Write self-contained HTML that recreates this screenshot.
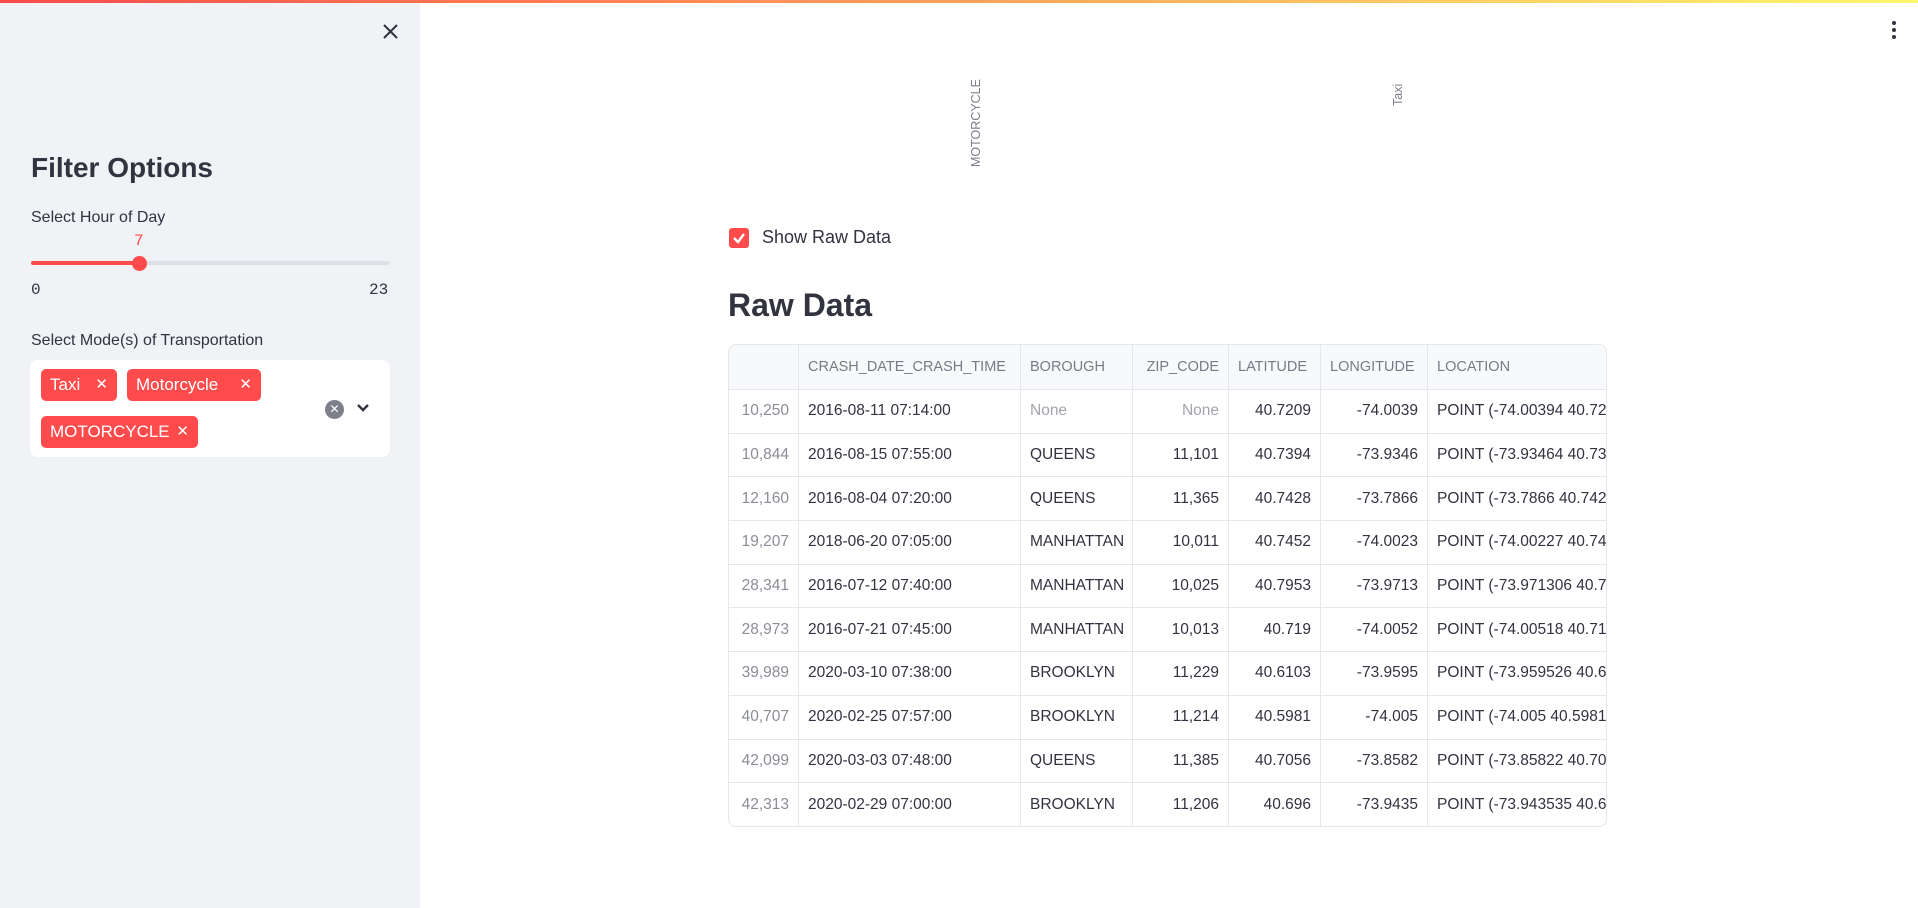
<!DOCTYPE html>
<html><head><meta charset="utf-8">
<style>
*{box-sizing:border-box;margin:0;padding:0}
body{width:1918px;height:908px;overflow:hidden;font-family:"Liberation Sans",sans-serif;background:#fff;color:#31333f;position:relative}
.topbar{position:absolute;left:0;top:0;width:1918px;height:3px;background:linear-gradient(90deg,#ff4b4b,#fdf76a)}
.side{position:absolute;left:0;top:0;width:420px;height:908px;background:#f0f2f6}
.abs{position:absolute;white-space:nowrap}
.tag{position:absolute;height:32px;background:#ff4b4b;color:#fff;border-radius:5px;font-size:17px;line-height:32px;padding-left:9px}
.tag span{position:absolute;right:9px;font-size:15px}
table{border-collapse:collapse;font-size:15.5px;table-layout:fixed}
td,th{border:1px solid #e6e7ea;height:43.7px;padding:0 9px;white-space:nowrap;overflow:hidden;font-weight:normal}
th{background:#f8f9fb;color:#777b85;text-align:left;height:45px;font-size:14.5px}
td.r{text-align:right}
td.i{color:#8a8d96;text-align:right}
td.n{color:#a3a5ad}
</style></head><body>
<div class="side"></div>
<div class="topbar"></div>
<svg class="abs" style="left:382px;top:23px" width="17" height="17" viewBox="0 0 17 17"><path d="M2 2L15 15M15 2L2 15" stroke="#31333f" stroke-width="2"/></svg>
<div class="abs" style="left:31px;top:152px;font-size:28px;font-weight:bold">Filter Options</div>
<div class="abs" style="left:31px;top:209px;font-size:16px">Select Hour of Day</div>
<div class="abs" style="left:134px;top:232px;font-size:16px;color:#ff4b4b;font-family:'Liberation Mono',monospace">7</div>
<div class="abs" style="left:31px;top:261px;width:359px;height:4px;background:#dde0e7;border-radius:2px"></div>
<div class="abs" style="left:31px;top:261px;width:109px;height:4px;background:#ff4b4b;border-radius:2px"></div>
<div class="abs" style="left:132px;top:256px;width:15px;height:15px;background:#ff4b4b;border-radius:50%"></div>
<div class="abs" style="left:31px;top:281px;font-size:16px;font-family:'Liberation Mono',monospace">0</div>
<div class="abs" style="left:369px;top:281px;font-size:16px;font-family:'Liberation Mono',monospace">23</div>
<div class="abs" style="left:31px;top:332px;font-size:16px">Select Mode(s) of Transportation</div>
<div class="abs" style="left:30px;top:360px;width:360px;height:97px;background:#fff;border-radius:8px"></div>
<div class="tag" style="left:41px;top:369px;width:76px">Taxi<span>✕</span></div>
<div class="tag" style="left:127px;top:369px;width:134px">Motorcycle<span>✕</span></div>
<div class="tag" style="left:41px;top:416px;width:157px">MOTORCYCLE<span>✕</span></div>
<div class="abs" style="left:325px;top:400px;width:19px;height:19px;border-radius:50%;background:#7d808a;color:#fff;font-size:12px;line-height:19px;text-align:center">✕</div>
<svg class="abs" style="left:356px;top:403px" width="14" height="10" viewBox="0 0 14 10"><path d="M2 2L7 7L12 2" stroke="#31333f" stroke-width="2.4" fill="none"/></svg>
<svg class="abs" style="left:1890px;top:20px" width="8" height="20"><circle cx="4" cy="3" r="2" fill="#31333f"/><circle cx="4" cy="10" r="2" fill="#31333f"/><circle cx="4" cy="17" r="2" fill="#31333f"/></svg>
<div class="abs" style="left:969px;top:167px;font-size:12.5px;color:#7d808a;transform:rotate(-90deg);transform-origin:0 0">MOTORCYCLE</div>
<div class="abs" style="left:1391px;top:106px;font-size:12.5px;color:#7d808a;transform:rotate(-90deg);transform-origin:0 0">Taxi</div>
<div class="abs" style="left:729px;top:228px;width:20px;height:20px;background:#ff4b4b;border-radius:3px"></div>
<svg class="abs" style="left:729px;top:228px" width="20" height="20"><path d="M5 10L9 14L15 6" stroke="#fff" stroke-width="2.4" fill="none"/></svg>
<div class="abs" style="left:762px;top:227px;font-size:18px">Show Raw Data</div>
<div class="abs" style="left:728px;top:287px;font-size:32px;font-weight:bold">Raw Data</div>
<div class="abs" style="left:728px;top:344px;width:879px;height:483px;border:1px solid #e6e7ea;border-radius:8px;overflow:hidden">
<table style="margin:-1px 0 0 -1px;width:920px">
<colgroup><col style="width:70px"><col style="width:222px"><col style="width:112px"><col style="width:96px"><col style="width:92px"><col style="width:107px"><col style="width:221px"></colgroup>
<tr><th></th><th>CRASH_DATE_CRASH_TIME</th><th>BOROUGH</th><th style="text-align:right">ZIP_CODE</th><th>LATITUDE</th><th>LONGITUDE</th><th>LOCATION</th></tr>
<tr><td class="i">10,250</td><td>2016-08-11 07:14:00</td><td class="n">None</td><td class="r n">None</td><td class="r">40.7209</td><td class="r">-74.0039</td><td>POINT (-74.00394 40.72</td></tr>
<tr><td class="i">10,844</td><td>2016-08-15 07:55:00</td><td>QUEENS</td><td class="r">11,101</td><td class="r">40.7394</td><td class="r">-73.9346</td><td>POINT (-73.93464 40.73</td></tr>
<tr><td class="i">12,160</td><td>2016-08-04 07:20:00</td><td>QUEENS</td><td class="r">11,365</td><td class="r">40.7428</td><td class="r">-73.7866</td><td>POINT (-73.7866 40.742</td></tr>
<tr><td class="i">19,207</td><td>2018-06-20 07:05:00</td><td>MANHATTAN</td><td class="r">10,011</td><td class="r">40.7452</td><td class="r">-74.0023</td><td>POINT (-74.00227 40.74</td></tr>
<tr><td class="i">28,341</td><td>2016-07-12 07:40:00</td><td>MANHATTAN</td><td class="r">10,025</td><td class="r">40.7953</td><td class="r">-73.9713</td><td>POINT (-73.971306 40.7</td></tr>
<tr><td class="i">28,973</td><td>2016-07-21 07:45:00</td><td>MANHATTAN</td><td class="r">10,013</td><td class="r">40.719</td><td class="r">-74.0052</td><td>POINT (-74.00518 40.71</td></tr>
<tr><td class="i">39,989</td><td>2020-03-10 07:38:00</td><td>BROOKLYN</td><td class="r">11,229</td><td class="r">40.6103</td><td class="r">-73.9595</td><td>POINT (-73.959526 40.6</td></tr>
<tr><td class="i">40,707</td><td>2020-02-25 07:57:00</td><td>BROOKLYN</td><td class="r">11,214</td><td class="r">40.5981</td><td class="r">-74.005</td><td>POINT (-74.005 40.5981</td></tr>
<tr><td class="i">42,099</td><td>2020-03-03 07:48:00</td><td>QUEENS</td><td class="r">11,385</td><td class="r">40.7056</td><td class="r">-73.8582</td><td>POINT (-73.85822 40.70</td></tr>
<tr><td class="i">42,313</td><td>2020-02-29 07:00:00</td><td>BROOKLYN</td><td class="r">11,206</td><td class="r">40.696</td><td class="r">-73.9435</td><td>POINT (-73.943535 40.6</td></tr>
</table></div>
</body></html>
